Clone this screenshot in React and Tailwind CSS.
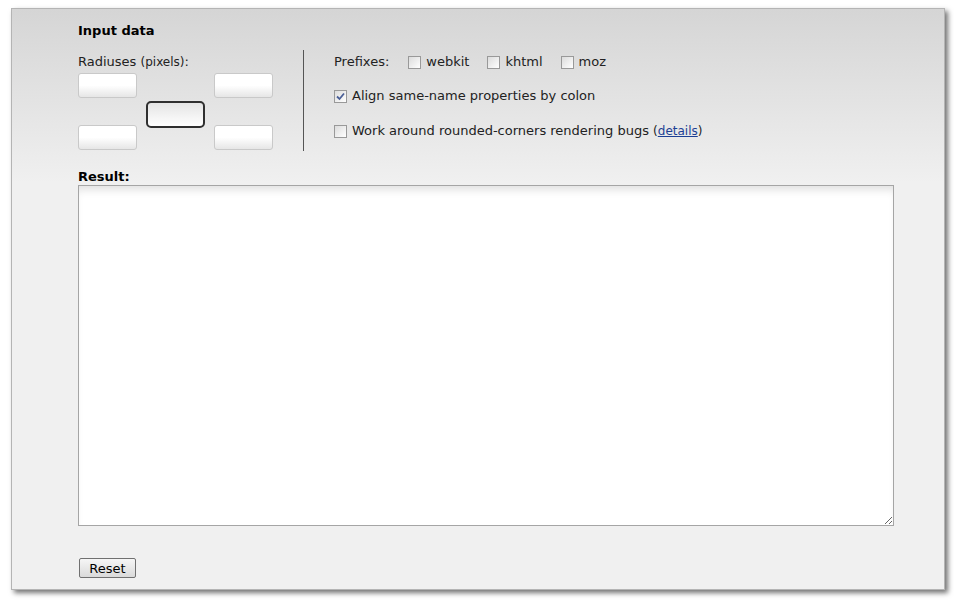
import React, { useState } from "react";

const font = { fontFamily: '"DejaVu Sans", Verdana, sans-serif' };

const Box = ({ checked, onChange }) => (
  <span
    onClick={onChange}
    className="inline-flex h-[13px] w-[13px] items-center justify-center border border-[#999] bg-gradient-to-br from-[#dcdcdc] to-white"
  >
    {checked && (
      <svg width="9" height="9" viewBox="0 0 9 9">
        <path d="M1 4.5 L3.5 7 L8 1.5" fill="none" stroke="#4a5f97" strokeWidth="1.8" />
      </svg>
    )}
  </span>
);

const Radius = ({ active }) =>
  active ? (
    <input className="h-[27px] w-[59px] rounded-[5px] border-2 border-[#2f2f2f] bg-gradient-to-b from-[#e4e4e4] to-white outline-none" />
  ) : (
    <input className="h-[25px] w-[59px] rounded-[3px] border border-[#c9c9c9] bg-gradient-to-b from-white via-white to-[#e6e6e6] outline-none" />
  );

export default function App() {
  const [prefix, setPrefix] = useState({ webkit: false, khtml: false, moz: false });
  const [align, setAlign] = useState(true);
  const [work, setWork] = useState(false);

  return (
    <div className="min-h-[600px] bg-white pl-[11px] pt-[8px]" style={font}>
      <div className="h-[582px] w-[934px] border border-[#b4b4b4] bg-gradient-to-b from-[#d5d5d5] to-[#f0f0f0] to-[30%] pl-[66px] pt-[14px] text-[13px] text-[#222] shadow-[3px_3px_5px_rgba(0,0,0,0.55)]">
        <h2 className="font-bold leading-4 text-black">Input data</h2>

        <div className="mt-[11px] flex">
          {/* radius inputs */}
          <div className="w-[225px] pt-[4px]">
            <div className="leading-4">
              Radiuses <span className="text-[12px]">(pixels)</span>:
            </div>
            <div className="mt-[3px] flex gap-[9px]">
              <div className="flex h-[77px] flex-col justify-between">
                <Radius />
                <Radius />
              </div>
              <div className="pt-[28px]">
                <Radius active />
              </div>
              <div className="flex h-[77px] flex-col justify-between">
                <Radius />
                <Radius />
              </div>
            </div>
          </div>

          <div className="flex h-[101px] flex-col border-l border-[#555] pl-[30px] pt-[4px]">
            <div className="flex items-center leading-4">
              <span className="mr-[19px]">Prefixes:</span>
              {["webkit", "khtml", "moz"].map((p) => (
                <label key={p} className="mr-[18px] flex items-center gap-[5px]">
                  <Box checked={prefix[p]} onChange={() => setPrefix({ ...prefix, [p]: !prefix[p] })} />
                  {p}
                </label>
              ))}
            </div>
            <label className="mt-[18px] flex items-center gap-[5px] leading-4">
              <Box checked={align} onChange={() => setAlign(!align)} />
              Align same-name properties by colon
            </label>
            <label className="mt-[19px] flex items-center gap-[5px] leading-4">
              <Box checked={work} onChange={() => setWork(!work)} />
              <span>
                Work around rounded-corners rendering bugs{" "}
                <span className="text-[12px]">
                  (<a href="#" className="text-[#1c3f94] underline">details</a>)
                </span>
              </span>
            </label>
          </div>
        </div>

        <div className="mt-[18px] font-bold leading-4 text-black">Result:</div>
        <textarea className="block h-[341px] w-[816px] resize border border-[#a5a5a5] bg-white shadow-[inset_0_8px_8px_-4px_rgba(0,0,0,0.12)] outline-none" />

        <button className="mt-[32px] ml-[1px] h-[20px] w-[57px] rounded-[2px] border border-[#707070] bg-gradient-to-b from-[#f6f6f6] to-[#dadada] text-[13px] leading-none text-black">
          Reset
        </button>
      </div>
    </div>
  );
}
